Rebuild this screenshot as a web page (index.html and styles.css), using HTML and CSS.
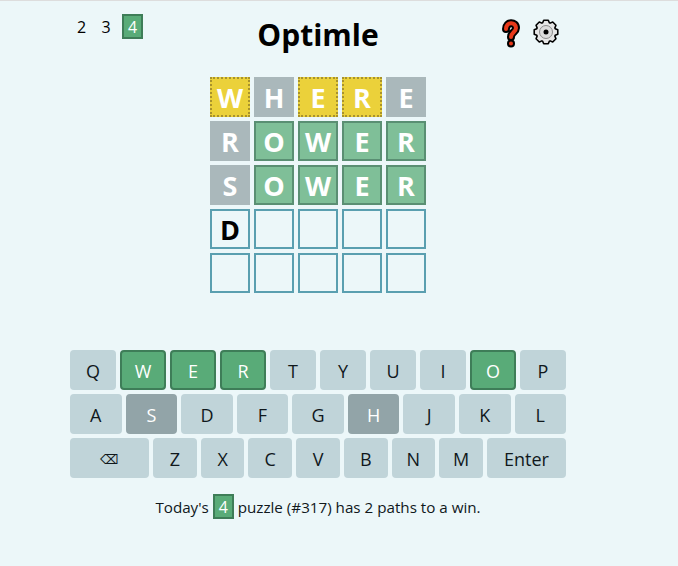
FILE: index.html
```html
<!DOCTYPE html>
<html lang="en">
<head>
    <meta charset="UTF-8">
    <meta name="viewport" content="width=device-width, initial-scale=1.0">
    <title>Optimle</title>
    <link rel="stylesheet" href="styles.css">
</head>
<body>
    <div class="app">
        <div class="header">
            <div class="levels">
                <span class="level">2</span>
                <span class="level">3</span>
                <span class="level level-active">4</span>
            </div>
            <h1 class="title">Optimle</h1>
            <div class="icons">
                <svg class="icon-help" width="22" height="30" viewBox="0 0 22 30">
                    <path class="help-outline" d="M6 10 C6 2.5 16 2.5 16 9 C16 13 11 13.5 11 18"/>
                    <path class="help-outline" d="M11 24.5 L11 24.6"/>
                    <path class="help-fill" d="M6 10 C6 2.5 16 2.5 16 9 C16 13 11 13.5 11 18"/>
                    <path class="help-fill" d="M11 24.5 L11 24.6"/>
                </svg>
                <svg class="icon-gear" width="26" height="26" viewBox="0 0 26 26">
                    <path class="gear-body" d="M9.65 3.79 L10.71 1.22 H15.29 L16.35 3.79 L17.14 4.12 L19.71 3.05 L22.95 6.29 L21.88 8.86 L22.21 9.65 L24.78 10.71 V15.29 L22.21 16.35 L21.88 17.14 L22.95 19.71 L19.71 22.95 L17.14 21.88 L16.35 22.21 L15.29 24.78 H10.71 L9.65 22.21 L8.86 21.88 L6.29 22.95 L3.05 19.71 L4.12 17.14 L3.79 16.35 L1.22 15.29 V10.71 L3.79 9.65 L4.12 8.86 L3.05 6.29 L6.29 3.05 L8.86 4.12 Z"/>
                    <circle class="gear-ring" cx="13" cy="13" r="6.5"/>
                    <circle class="gear-hub" cx="13" cy="13" r="2.5"/>
                </svg>
            </div>
        </div>

        <div class="board">
            <div class="tile tile-present">W</div>
            <div class="tile tile-absent">H</div>
            <div class="tile tile-present">E</div>
            <div class="tile tile-present">R</div>
            <div class="tile tile-absent">E</div>

            <div class="tile tile-absent">R</div>
            <div class="tile tile-correct">O</div>
            <div class="tile tile-correct">W</div>
            <div class="tile tile-correct">E</div>
            <div class="tile tile-correct">R</div>

            <div class="tile tile-absent">S</div>
            <div class="tile tile-correct">O</div>
            <div class="tile tile-correct">W</div>
            <div class="tile tile-correct">E</div>
            <div class="tile tile-correct">R</div>

            <div class="tile tile-empty">D</div>
            <div class="tile tile-empty"></div>
            <div class="tile tile-empty"></div>
            <div class="tile tile-empty"></div>
            <div class="tile tile-empty"></div>

            <div class="tile tile-empty"></div>
            <div class="tile tile-empty"></div>
            <div class="tile tile-empty"></div>
            <div class="tile tile-empty"></div>
            <div class="tile tile-empty"></div>
        </div>

        <div class="keyboard">
            <div class="key-row">
                <button class="key">Q</button>
                <button class="key key-correct">W</button>
                <button class="key key-correct">E</button>
                <button class="key key-correct">R</button>
                <button class="key">T</button>
                <button class="key">Y</button>
                <button class="key">U</button>
                <button class="key">I</button>
                <button class="key key-correct">O</button>
                <button class="key">P</button>
            </div>
            <div class="key-row">
                <button class="key">A</button>
                <button class="key key-absent">S</button>
                <button class="key">D</button>
                <button class="key">F</button>
                <button class="key">G</button>
                <button class="key key-absent">H</button>
                <button class="key">J</button>
                <button class="key">K</button>
                <button class="key">L</button>
            </div>
            <div class="key-row">
                <button class="key key-wide key-back">⌫</button>
                <button class="key">Z</button>
                <button class="key">X</button>
                <button class="key">C</button>
                <button class="key">V</button>
                <button class="key">B</button>
                <button class="key">N</button>
                <button class="key">M</button>
                <button class="key key-wide">Enter</button>
            </div>
        </div>

        <div class="status">
            Today's <span class="level level-active">4</span> puzzle (#317) has 2 paths to a win.
        </div>
    </div>
</body>
</html>
```

FILE: styles.css
```css
html {
    background-color: #ecf7f9;
}
body {
    margin: 0;
    height: 565px;
    overflow: hidden;
    border-top: 1px solid #dddddd;
    font-family: "Open Sans", "Noto Sans", sans-serif;
    color: #000000;
}
.app {
    width: 496px;
    margin-left: 70px;
}
.header {
    display: grid;
    grid-template-columns: 1fr auto 1fr;
    height: 76px;
}
.levels {
    display: flex;
    align-items: flex-start;
    gap: 7.5px;
    padding-left: 3px;
    padding-top: 13px;
}
.level {
    display: inline-block;
    width: 17px;
    height: 25px;
    line-height: 27px;
    text-align: center;
    font-size: 16px;
}
.level-active {
    box-sizing: border-box;
    width: 21px;
    line-height: 23px;
    background-color: #59ab78;
    border: 2px solid #3e7d58;
    color: #ffffff;
}
.title {
    margin: 0;
    padding-top: 12px;
    font-size: 30px;
    line-height: 44px;
    font-weight: 700;
}
.icons {
    display: flex;
    justify-content: flex-end;
    align-items: flex-start;
    gap: 11px;
    padding-top: 18px;
    padding-right: 7px;
}
.help-outline,
.help-fill {
    fill: none;
    stroke-linecap: round;
    stroke-linejoin: round;
}
.help-outline {
    stroke: #000000;
    stroke-width: 8;
}
.help-fill {
    stroke: #e8391a;
    stroke-width: 4;
}
.gear-body {
    fill: #e6e6e6;
    stroke: #000000;
    stroke-width: 1.6;
    stroke-linejoin: round;
}
.gear-ring {
    fill: #dcdcdc;
    stroke: #8c8c8c;
    stroke-width: 1;
}
.gear-hub {
    fill: #000000;
}
.board {
    display: grid;
    grid-template-columns: repeat(5, 40px);
    grid-auto-rows: 40px;
    gap: 4px;
    justify-content: center;
}
.tile {
    box-sizing: border-box;
    display: flex;
    align-items: center;
    justify-content: center;
    font-size: 27px;
    font-weight: 700;
    color: #ffffff;
}
.tile-present {
    background-color: #ebd13a;
    border: 2px dotted #a8922c;
}
.tile-absent {
    background-color: #aab8bb;
}
.tile-correct {
    background-color: #7fbf98;
    border: 2px solid #5a8f73;
}
.tile-empty {
    border: 2px solid #5a9fb0;
    color: #000000;
}
.keyboard {
    margin-top: 57px;
    display: flex;
    flex-direction: column;
    gap: 4px;
}
.key-row {
    display: flex;
    gap: 4px;
}
.key {
    box-sizing: border-box;
    flex: 1 1 0;
    min-width: 0;
    height: 40px;
    padding: 2px 0 0;
    border: 2px solid #c0d4d9;
    border-radius: 4px;
    background-color: #c0d4d9;
    color: #10181c;
    font-family: "Open Sans", "Noto Sans", sans-serif;
    font-size: 18px;
}
.key-wide {
    flex-grow: 1.89;
}
.key-back {
    font-family: "DejaVu Sans", sans-serif;
    font-size: 13px;
}
.key-correct {
    background-color: #59ab78;
    border-color: #3e7d58;
    color: #ffffff;
}
.key-absent {
    background-color: #92a4a8;
    border-color: #92a4a8;
    color: #ffffff;
}
.status {
    margin-top: 16px;
    text-align: center;
    font-size: 15.2px;
    line-height: 27px;
    color: #10181c;
}
.status .level {
    vertical-align: top;
    font-size: 16px;
}
```
